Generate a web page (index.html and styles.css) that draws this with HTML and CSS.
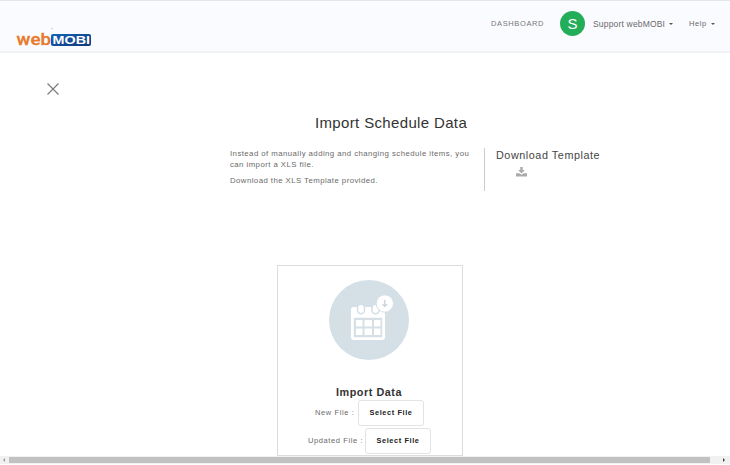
FILE: index.html
```html
<!DOCTYPE html>
<html lang="en">
<head>
<meta charset="utf-8">
<title>Import Schedule Data</title>
<link rel="stylesheet" href="styles.css">
</head>
<body>
<header class="topbar">
  <svg class="logo" width="78" height="24" viewBox="0 0 78 24">
    <defs><linearGradient id="blue" x2="1" y2="1"><stop stop-color="#1264b5"/><stop offset="1" stop-color="#12377f"/></linearGradient></defs>
    <circle cx="36" cy="2.5" r=".8" fill="#b5cee5"/>
    <text class="logo-web" x=".5" y="18.8" textLength="34.5" lengthAdjust="spacingAndGlyphs">web</text>
    <rect x="35" y="8" width="40" height="12" rx="2" fill="url(#blue)"/>
    <text class="logo-mobi" x="36.5" y="18" textLength="37.5" lengthAdjust="spacingAndGlyphs">MOBI</text>
  </svg>
  <nav class="nav">
    <span class="dashboard">DASHBOARD</span>
    <span class="avatar">S</span>
    <span class="account">Support webMOBI</span><i class="caret"></i>
    <span class="help">Help</span><i class="caret"></i>
  </nav>
</header>
<main class="page">
  <svg class="close" width="12" height="12" viewBox="0 0 12 12"><path d="M.5.5l11 11M11.5.5l-11 11" stroke="#777" stroke-width="1.1"/></svg>
  <h1>Import Schedule Data</h1>
  <section class="intro">
    <div class="copy">
      <p>Instead of manually adding and changing schedule items, you<br>can import a XLS file.</p>
      <p>Download the XLS Template provided.</p>
    </div>
    <div class="template">
      <h2>Download Template</h2>
      <svg class="download" width="11" height="10" viewBox="0 0 11 10"><path d="M4.3 0h2.4v3h2.2L5.5 6.4 2.1 3h2.2zM0 6.2h3.2l2.3 1.5 2.3-1.5H11v3.2H0z" fill="#aaa"/></svg>
    </div>
  </section>
  <section class="card">
    <svg class="picture" width="80" height="80" viewBox="0 0 80 80">
      <circle cx="40" cy="40" r="40" fill="#d4dfe6"/>
      <path fill="#fff" fill-rule="evenodd" d="M25 27h28.5a2.5 2.5 0 0 1 2.5 2.5V57a3 3 0 0 1-3 3H25a3 3 0 0 1-3-3V30a3 3 0 0 1 3-3zM24.8 37.7v19.5h28.4V37.7z"/>
      <path fill="#fff" d="M27 40h6.5v6.5H27zM35.5 40H43v6.5h-7.500zM45 40h6.500v6.5H45zM27 48.500h6.500V55H27zM35.500 48.500H43V55h-7.500zM45 48.500h6.500V55H45z"/>
      <g fill="#fff" stroke="#d4dfe6" stroke-width="1.5"><rect x="28.500" y="24.300" width="7" height="9.400" rx="3.500"/><rect x="43" y="24.300" width="7" height="9.400" rx="3.500"/></g>
      <circle cx="55.800" cy="23.500" r="8.700" fill="#fff" stroke="#d4dfe6"/>
      <path d="M55.800 19.700v6.500m-2.300-2l2.300 2.200 2.300-2.200" fill="none" stroke="#c8d3da" stroke-width="1.300"/>
    </svg>
    <h3>Import Data</h3>
    <div class="row"><span class="label new">New File :</span><button>Select File</button></div>
    <div class="row updated"><span class="label old">Updated File :</span><button>Select File</button></div>
  </section>
</main>
<footer class="scrollbar"><i class="arrow left"></i><span class="thumb"></span><i class="arrow right"></i></footer>
</body>
</html>
```
FILE: styles.css
```css
* { box-sizing: border-box; }
body {
  margin: 0;
  width: 730px;
  height: 465px;
  overflow: hidden;
  display: flex;
  flex-direction: column;
  background: #fff;
  color: #6a6a6a;
  font-family: "Liberation Sans", Arial, sans-serif;
}
h1, h2, h3, p { margin: 0; font-weight: 400; white-space: nowrap; }
svg { display: block; }
.topbar {
  height: 53px;
  flex: none;
  display: flex;
  align-items: flex-start;
  background: #fafbff;
  border-top: 1px solid #e2e7ec;
  border-bottom: 2px solid #f0f1f4;
}
.logo { margin: 25px 0 0 16px; }
.logo-web { font: 500 17px Roboto, sans-serif; fill: #e8792a; stroke: #e8792a; stroke-width: .3px; }
.logo-mobi { font: 700 11.5px "Liberation Sans", sans-serif; fill: #fff; }
.nav {
  height: 45px;
  margin-left: 397px;
  display: flex;
  align-items: center;
  white-space: nowrap;
}
.dashboard { width: 69px; font-size: 7.5px; letter-spacing: .62px; color: #777; }
.avatar {
  width: 25px;
  height: 25px;
  border-radius: 50%;
  background: #23ad58;
  color: #fff;
  font-size: 15px;
  line-height: 25px;
  text-align: center;
}
.account { width: 76px; margin-left: 8px; font-size: 8.5px; letter-spacing: .18px; }
.help { width: 22px; margin-left: 16px; font-size: 7.5px; letter-spacing: .6px; }
.caret { border: 2px solid transparent; border-top-color: #555; border-bottom: 0; }
.page { height: 403px; flex: none; overflow: hidden; }
.close { margin: 30px 0 0 47px; }
h1 {
  margin: 19px 0 0 315px;
  font-size: 15px;
  line-height: 18px;
  letter-spacing: .35px;
  color: #333;
}
.intro { display: flex; margin: 16px 0 0 230px; }
.copy { width: 255px; height: 43px; border-right: 1px solid #ccc; font-size: 7.8px; line-height: 11px; letter-spacing: .44px; }
.copy p + p { margin-top: 5px; }
.template { padding-left: 11px; }
h2 { font-size: 10.8px; line-height: 14px; letter-spacing: .56px; color: #444; }
.download { margin: 5px 0 0 20px; }
.card {
  width: 186px;
  height: 191px;
  margin: 74px 0 0 277px;
  padding-top: 14px;
  border: 1px solid #dcdcdc;
}
.picture { margin-left: 51px; }
h3 { margin: 25px 0 1px 58px; font-size: 10.8px; line-height: 14px; letter-spacing: .55px; font-weight: 700; color: #333; }
.row { display: flex; align-items: center; margin-left: 37px; height: 26px; }
.updated { margin: 2px 0 0 30px; }
.label { padding-bottom: 1px; font-size: 7.5px; letter-spacing: .6px; white-space: nowrap; }
.new { width: 43px; }
.old { width: 57px; }
button {
  width: 66px;
  height: 26px;
  padding: 0 0 1px;
  border: 1px solid #e3e3e3;
  border-radius: 3px;
  background: #fff;
  color: #222;
  font: 700 7.4px "Liberation Sans", Arial, sans-serif;
  letter-spacing: .6px;
}
.scrollbar { height: 8px; display: flex; align-items: center; background: #f1f1f1; }
.thumb { width: 701px; height: 6px; margin: 0 13px 0 4px; background: #c1c1c1; }
.arrow { width: 0; height: 0; border: 2px solid transparent; }
.left { margin-left: 3px; border-left: 0; border-right-color: #999; }
.right { border-right: 0; border-left-color: #444; }
```
